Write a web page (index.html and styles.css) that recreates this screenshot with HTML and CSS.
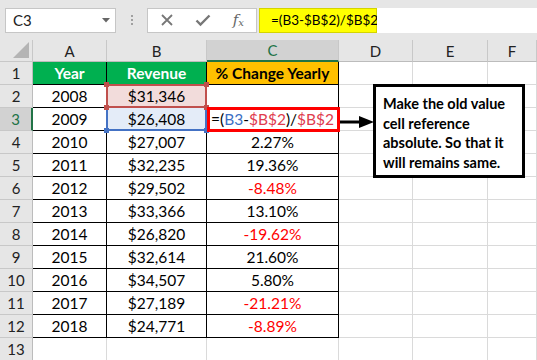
FILE: index.html
```html
<!DOCTYPE html>
<html lang="en">
<head>
  <meta charset="UTF-8" />
  <title>% Change Yearly</title>
  <link rel="stylesheet" href="styles.css">
</head>
<body>

<div class="toolbar">
  <div class="name-box">
    <span>C3</span>
    <svg class="drop" width="8" height="5" viewBox="0 0 8 5"><path d="M0 0h8L4 4.5z" fill="#666"/></svg>
  </div>
  <div class="grip"><i></i><i></i><i></i></div>
  <div class="fx-box">
    <svg width="14" height="14" viewBox="0 0 14 14"><path d="M2 2l10 10M12 2L2 12" stroke="#777" stroke-width="1.8" fill="none"/></svg>
    <svg width="16" height="14" viewBox="0 0 16 14"><path d="M1.5 7.5l4 4L14.5 2.5" stroke="#777" stroke-width="2.4" fill="none"/></svg>
    <span class="fx">f<sub>x</sub></span>
  </div>
  <div class="formula-hl">=(B3-$B$2)/$B$2</div>
  <div class="formula-rest"></div>
</div>

<div class="sheet">
  <div class="grid">
    <div class="corner"><svg width="16" height="16" viewBox="0 0 16 16"><path d="M16 0V16H0z" fill="#b4b4b4"/></svg></div>
    <div class="col-head">A</div>
    <div class="col-head">B</div>
    <div class="col-head active">C</div>
    <div class="col-head">D</div>
    <div class="col-head">E</div>
    <div class="col-head">F</div>

    <div class="row-head">1</div>
    <div class="cell tbl head-green">Year</div>
    <div class="cell tbl head-green">Revenue</div>
    <div class="cell tbl head-orange">% Change Yearly</div>
    <div class="cell"></div><div class="cell"></div><div class="cell"></div>

    <div class="row-head">2</div>
    <div class="cell tbl">2008</div>
    <div class="cell tbl sel-red">$31,346<i class="knob tl"></i><i class="knob tr"></i><i class="knob bl"></i><i class="knob br"></i></div>
    <div class="cell tbl"></div>
    <div class="cell"></div><div class="cell"></div><div class="cell"></div>

    <div class="row-head active">3</div>
    <div class="cell tbl">2009</div>
    <div class="cell tbl sel-blue">$26,408<i class="knob bl"></i><i class="knob br"></i></div>
    <div class="cell tbl editing">=(<span class="ref-blue">B3</span>-<span class="ref-red">$B$2</span>)/<span class="ref-red">$B$2</span></div>
    <div class="cell"></div><div class="cell"></div><div class="cell"></div>

    <div class="row-head">4</div>
    <div class="cell tbl">2010</div><div class="cell tbl">$27,007</div><div class="cell tbl">2.27%</div>
    <div class="cell"></div><div class="cell"></div><div class="cell"></div>

    <div class="row-head">5</div>
    <div class="cell tbl">2011</div><div class="cell tbl">$32,235</div><div class="cell tbl">19.36%</div>
    <div class="cell"></div><div class="cell"></div><div class="cell"></div>

    <div class="row-head">6</div>
    <div class="cell tbl">2012</div><div class="cell tbl">$29,502</div><div class="cell tbl neg">-8.48%</div>
    <div class="cell"></div><div class="cell"></div><div class="cell"></div>

    <div class="row-head">7</div>
    <div class="cell tbl">2013</div><div class="cell tbl">$33,366</div><div class="cell tbl">13.10%</div>
    <div class="cell"></div><div class="cell"></div><div class="cell"></div>

    <div class="row-head">8</div>
    <div class="cell tbl">2014</div><div class="cell tbl">$26,820</div><div class="cell tbl neg">-19.62%</div>
    <div class="cell"></div><div class="cell"></div><div class="cell"></div>

    <div class="row-head">9</div>
    <div class="cell tbl">2015</div><div class="cell tbl">$32,614</div><div class="cell tbl">21.60%</div>
    <div class="cell"></div><div class="cell"></div><div class="cell"></div>

    <div class="row-head">10</div>
    <div class="cell tbl">2016</div><div class="cell tbl">$34,507</div><div class="cell tbl">5.80%</div>
    <div class="cell"></div><div class="cell"></div><div class="cell"></div>

    <div class="row-head">11</div>
    <div class="cell tbl">2017</div><div class="cell tbl">$27,189</div><div class="cell tbl neg">-21.21%</div>
    <div class="cell"></div><div class="cell"></div><div class="cell"></div>

    <div class="row-head">12</div>
    <div class="cell tbl">2018</div><div class="cell tbl">$24,771</div><div class="cell tbl neg">-8.89%</div>
    <div class="cell"></div><div class="cell"></div><div class="cell"></div>

    <div class="row-head">13</div>
    <div class="cell"></div><div class="cell"></div><div class="cell"></div>
    <div class="cell"></div><div class="cell"></div><div class="cell"></div>
  </div>

  <svg class="arrow" width="36" height="14" viewBox="0 0 36 14">
    <path d="M0 7H22" stroke="#000" stroke-width="3"/>
    <path d="M20 1L35 7L20 13z" fill="#000"/>
  </svg>

  <div class="callout">Make the old value cell reference absolute. So that it will remains same.</div>
</div>

</body>
</html>
```

FILE: styles.css
```css
body {
  margin: 0;
  font-family: 'Lato', 'Liberation Sans', sans-serif;
  background: #fff;
  color: #000;
  width: 537px;
  height: 360px;
  overflow: hidden;
}

.toolbar {
  display: flex;
  align-items: center;
  height: 40px;
  padding-left: 5px;
  background: #e6e6e6;
  box-sizing: border-box;
}

.name-box {
  width: 111px;
  height: 25px;
  box-sizing: border-box;
  background: #fff;
  border: 1px solid #c6c6c6;
  display: flex;
  align-items: center;
  justify-content: space-between;
  padding: 0 5px 0 7px;
  font-size: 15px;
  color: #222;
}

.grip {
  width: 31px;
  display: flex;
  flex-direction: column;
  align-items: center;
  gap: 2px;
}

.grip i {
  width: 2px;
  height: 2px;
  background: #a0a0a0;
}

.fx-box {
  width: 110px;
  height: 25px;
  box-sizing: border-box;
  background: #fff;
  border: 1px solid #c6c6c6;
  display: flex;
  align-items: center;
  justify-content: space-between;
  padding: 0 12px 0 12px;
}

.fx {
  font-family: 'DejaVu Serif', serif;
  font-style: italic;
  font-size: 15px;
  color: #666;
  line-height: 1;
}

.fx sub {
  font-size: 10px;
  vertical-align: -1px;
}

.formula-hl {
  margin-left: 2px;
  width: 118px;
  height: 25px;
  box-sizing: border-box;
  background: #ffff00;
  border: 1px solid #d4d400;
  font-size: 13.5px;
  line-height: 23px;
  padding-left: 11px;
  white-space: nowrap;
}

.formula-rest {
  flex: 1;
  height: 25px;
  background: #fff;
}

.sheet {
  position: relative;
}

.grid {
  display: grid;
  grid-template-columns: 33px 74px 100px 132px 74px 75px 1fr;
  grid-template-rows: 22px repeat(13, 23px);
}

.grid > div {
  box-sizing: border-box;
  display: flex;
  align-items: center;
  justify-content: center;
  white-space: nowrap;
}

.corner {
  background: #e6e6e6;
  border-right: 1px solid #c8c8c8;
  border-bottom: 1px solid #c8c8c8;
  align-items: flex-end !important;
  justify-content: flex-end !important;
  padding: 0 3px 3px 0;
}

.col-head {
  background: #e6e6e6;
  border-right: 1px solid #c8c8c8;
  border-bottom: 1px solid #bcbcbc;
  font-size: 15px;
  color: #222;
}

.col-head.active {
  background: #d2d2d2;
  color: #217346;
  border-bottom: 2px solid #217346;
}

.row-head {
  background: #e6e6e6;
  border-right: 1px solid #bcbcbc;
  border-bottom: 1px solid #c8c8c8;
  font-size: 15px;
  color: #222;
}

.row-head.active {
  background: #d2d2d2;
  color: #217346;
  border-right: 2px solid #217346;
}

.cell {
  border-right: 1px solid #dadada;
  border-bottom: 1px solid #dadada;
  font-size: 15.5px;
  position: relative;
}

.cell.tbl {
  border-color: #000;
}

.head-green {
  background: #00b050;
  color: #fff;
  font-weight: bold;
}

.head-orange {
  background: #ffc000;
  font-weight: bold;
}

.neg {
  color: #ff0000;
}

.sel-red {
  background: #f2dcdb;
}

.sel-red::before {
  content: '';
  position: absolute;
  top: -1px;
  left: -1px;
  right: -1px;
  bottom: -1px;
  border: 2px solid #c0504d;
}

.sel-blue {
  background: #e4ecf8;
}

.sel-blue::before {
  content: '';
  position: absolute;
  top: 0;
  left: -1px;
  right: -1px;
  bottom: -1px;
  border: 2px solid #4472c4;
  border-top: none;
}

.knob {
  position: absolute;
  width: 5px;
  height: 5px;
  background: #c0504d;
  z-index: 2;
}

.sel-blue .knob {
  background: #4472c4;
}

.knob.tl { top: -3px; left: -3px; }
.knob.tr { top: -3px; right: -3px; }
.knob.bl { bottom: -3px; left: -3px; }
.knob.br { bottom: -3px; right: -3px; }

.editing {
  justify-content: flex-start !important;
  padding-left: 4px;
  z-index: 3;
}

.editing::before {
  content: '';
  position: absolute;
  top: -1px;
  left: 0;
  right: -2px;
  bottom: -2px;
  border: 3px solid #ff0000;
}

.ref-blue {
  color: #3c6fc4;
}

.ref-red {
  color: #e03c4e;
}

.arrow {
  position: absolute;
  left: 339px;
  top: 75px;
}

.callout {
  position: absolute;
  left: 373px;
  top: 44px;
  width: 152px;
  height: 94px;
  box-sizing: border-box;
  border: 3px solid #000;
  background: #fff;
  padding: 7px 4px 0 7px;
  font-size: 14.5px;
  font-weight: bold;
  line-height: 19.5px;
}
```
